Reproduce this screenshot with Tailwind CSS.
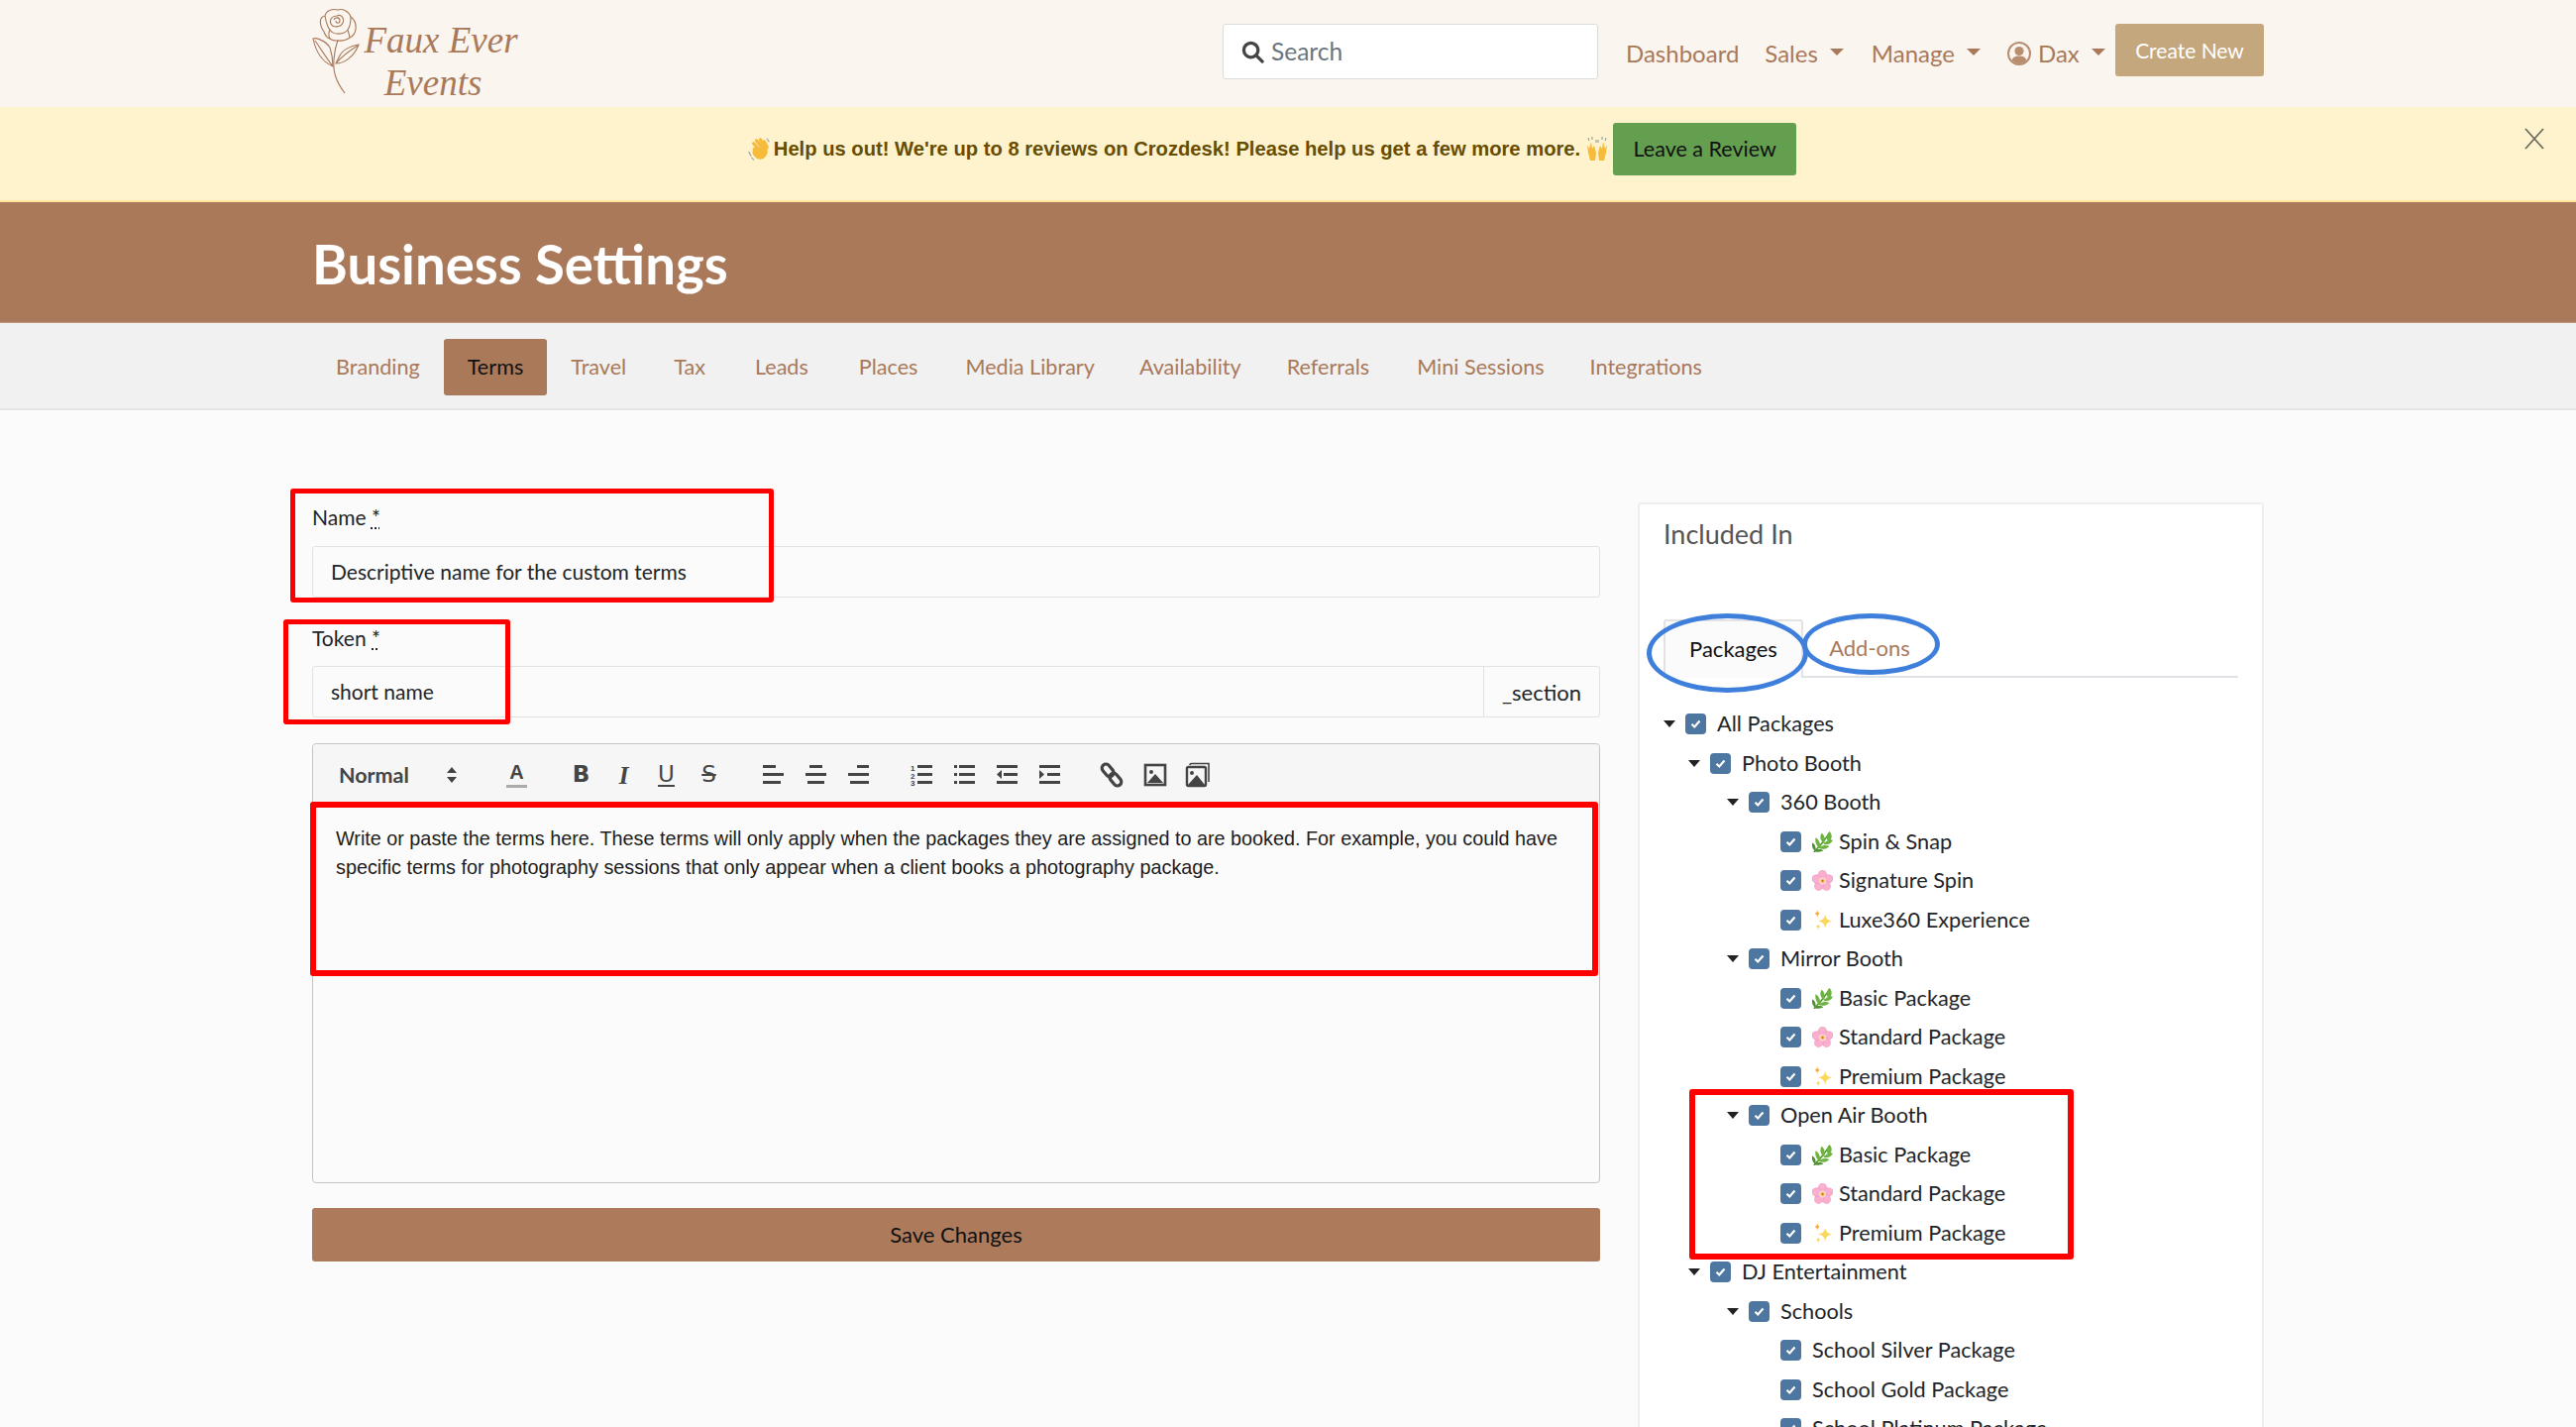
<!DOCTYPE html>
<html lang="en">
<head>
    <meta charset="UTF-8">
    <title>Business Settings - Faux Ever Events</title>
    <script src="https://cdn.jsdelivr.net/npm/@tailwindcss/browser@4"></script>
</head>
<body class="bg-[#fbfbfb]">
    <!-- emoji drawings, no emoji font available -->
    <svg class="hidden">
        <symbol id="e-herb" viewBox="0 0 24 24">
            <path d="M2 24 C8 18 14 11 20 2" fill="none" stroke="#4e9132" stroke-width="1.6"/>
            <path d="M20 0 C24 4 23 9 19 12 C16 8 16 4 20 0Z M11 2 C15 5 15 10 14 14 C10 12 8 6 11 2Z M24 10 C22 14 18 16 13 15 C15 11 20 9 24 10Z M4 7 C8 9 10 14 9 19 C5 17 3 12 4 7Z M20 17 C16 21 11 21 7 19 C10 16 16 15 20 17Z" fill="#6db33f"/>
            <path d="M0 13 C3 14 5 18 4 23 C1 21 -1 17 0 13Z M13 22 C10 24 6 24 3 23 C5 20 10 20 13 22Z" fill="#4e9132"/>
        </symbol>
        <symbol id="e-flower" viewBox="0 0 24 24">
            <g fill="#f9b0cf" stroke="#ee86b2" stroke-width=".5">
                <ellipse cx="12" cy="6" rx="5" ry="6"/>
                <ellipse cx="12" cy="6" rx="5" ry="6" transform="rotate(72 12 12.500)"/>
                <ellipse cx="12" cy="6" rx="5" ry="6" transform="rotate(144 12 12.500)"/>
                <ellipse cx="12" cy="6" rx="5" ry="6" transform="rotate(216 12 12.500)"/>
                <ellipse cx="12" cy="6" rx="5" ry="6" transform="rotate(288 12 12.500)"/>
            </g>
            <circle cx="12" cy="12.500" r="4" fill="#fbd3e2"/>
            <circle cx="12" cy="12.500" r="2.200" fill="#f2b632"/>
            <circle cx="12" cy="12.500" r="1" fill="#e25d4a"/>
        </symbol>
        <symbol id="e-spark" viewBox="0 0 24 24">
            <path d="M15 5 C15.800 10 17 11.500 23 13 C17 14.500 15.800 16 15 22 C14.200 16 13 14.500 7 13 C13 11.500 14.200 10 15 5Z" fill="#fbd75b"/>
            <path d="M6 0 C6.400 3 7 3.600 9 4.500 C7 5.400 6.400 6 6 9 C5.600 6 5 5.400 3 4.500 C5 3.600 5.600 3 6 0Z" fill="#f7a93b"/>
            <path d="M7 16 C7.300 18 7.800 18.600 9.500 19.500 C7.800 20.400 7.300 21 7 24 C6.700 21 6.200 20.400 4.500 19.500 C6.200 18.600 6.700 18 7 16Z" fill="#fbd75b"/>
        </symbol>
        <symbol id="e-wave" viewBox="0 0 24 24">
            <path d="M7 6 L13 13 M10 3 L16 11 M14 2 L19 10 M18 4 L21 10" stroke="#f7bb3c" stroke-width="3.400" stroke-linecap="round"/>
            <path d="M6 11 C8 9 10 10 12 11 L20 8 C23 13 22 19 17 22 C12 24 8 21 6 17Z" fill="#f7bb3c"/>
            <path d="M2 15 L4 19 M5 21 L7 23 M21 1 L23 4" stroke="#9aa5ad" stroke-width="1.200" stroke-linecap="round"/>
        </symbol>
        <symbol id="e-hands" viewBox="0 0 24 24">
            <path d="M2 8 L3 16 L5 24 L10 24 L11 16 L9 9 L7 12 L6 5 L4 12Z M22 8 L21 16 L19 24 L14 24 L13 16 L15 9 L17 12 L18 5 L20 12Z" fill="#f7bb3c"/>
            <path d="M3 1 L4 4 M7 0 L7 3 M17 0 L17 3 M21 1 L20 4 M11 3 L11 6 M13 3 L13 6" stroke="#8a949c" stroke-width="1"/>
        </symbol>
    </svg>

    <div class="relative w-[2600px] h-[1440px] overflow-hidden font-['Lato',sans-serif] text-[21px] text-[#212529]">

        <!-- top nav -->
        <header class="h-[108px] bg-[#faf5ef]">
            <div class="w-[1970px] mx-auto h-full flex items-start">
                <div class="w-[919px] flex items-start pt-[8px]">
                    <svg class="w-[48px] h-[88px] shrink-0" viewBox="0 0 48 88" fill="none" stroke="#a9795a" stroke-width="1.100">
                        <path d="M12 24 C7 17 7 9 13 8 C14 3 20 .5 26 2 C31 .5 37 3 39 9 C47 15 45 27 38 30 C33 34 22 34 18 31 C14 30 13 27 12 24Z"/>
                        <path d="M25 8 C20 8 17 12 19 16 C21 20 29 20 31 15 C33 10 29 6 25 8 M22 12 C23 9 28 9 28 13 C28 16 24 16 24 13"/>
                        <path d="M13 8 C14 13 15 19 18 22 C22 28 32 27 36 22 C39 18 39 13 39 9 M18 22 C16 26 17 29 18 31 M36 22 C37 26 38 28 38 30"/>
                        <path d="M26 32 C22 44 20 60 24 70 C26 76 30 82 33 86"/>
                        <path d="M1 31 C3 30 13 32 18 40 C20 46 21 54 21 59 C14 56 5 50 1 31Z M3 33 C8 40 14 50 21 59"/>
                        <path d="M47 37 C40 38 31 42 28 48 C26 52 24 56 24 56 C32 56 42 50 47 37Z M46 38 C38 43 30 49 24 56"/>
                    </svg>
                    <div class="ml-[2px] mt-[11px] w-[160px] text-center font-['Liberation_Serif',serif] italic text-[37px] leading-[43px] text-[#a9795a] whitespace-nowrap">
                        <div>Faux Ever</div>
                        <div class="pr-[16px]">Events</div>
                    </div>
                </div>
                <div class="mt-[24px] w-[379px] h-[56px] bg-white border border-[#dcdcdc] rounded-[3px] flex items-center pl-[18px] text-[#6c757d] text-[24.500px]">
                    <svg class="w-[23px] h-[23px] mr-[7px]" viewBox="0 0 24 24" fill="none" stroke="#444" stroke-width="3.400"><circle cx="10" cy="10" r="7.500"/><path d="M15.500 15.500 L22 22" stroke-linecap="round"/></svg>
                    Search
                </div>
                <nav class="h-[108px] flex items-center text-[#a9795a] text-[24px] whitespace-nowrap">
                    <a class="ml-[28px]">Dashboard</a>
                    <a class="ml-[26px] flex items-center">Sales<i class="ml-[12px] mb-[4px] border-x-[7px] border-x-transparent border-t-[7px] border-t-[#a9795a]"></i></a>
                    <a class="ml-[28px] flex items-center">Manage<i class="ml-[12px] mb-[4px] border-x-[7px] border-x-transparent border-t-[7px] border-t-[#a9795a]"></i></a>
                    <a class="ml-[27px] flex items-center">
                        <svg class="w-[24px] h-[24px] mr-[7px]" viewBox="0 0 24 24"><circle cx="12" cy="12" r="11" fill="none" stroke="#b98d70" stroke-width="2"/><circle cx="12" cy="9.500" r="4.600" fill="#b98d70"/><path d="M4.500 19 C6 15 9 14.500 12 14.500 C15 14.500 18 15 19.500 19 C15 23 9 23 4.500 19Z" fill="#b98d70"/></svg>
                        Dax<i class="ml-[12px] mb-[4px] border-x-[7px] border-x-transparent border-t-[7px] border-t-[#a9795a]"></i>
                    </a>
                </nav>
                <a class="ml-auto mt-[24px] w-[150px] h-[53px] bg-[#c4a77d] rounded-[3px] text-white text-[21px] flex items-center justify-center">Create New</a>
            </div>
        </header>

        <!-- review banner -->
        <div class="relative h-[96px] bg-[#fff3cd] border-b-2 border-[#ffe69c] flex items-center justify-center pr-[33px] pb-[10px]">
            <svg class="w-[23px] h-[23px] mr-[4px]"><use href="#e-wave"/></svg>
            <b class="font-['Liberation_Sans',sans-serif] text-[20.200px] text-[#664d03] whitespace-nowrap">Help us out! We're up to 8 reviews on Crozdesk! Please help us get a few more more.</b>
            <svg class="w-[24px] h-[24px] ml-[5px] mr-[4px]"><use href="#e-hands"/></svg>
            <a class="w-[185px] h-[53px] bg-[#649f50] rounded-[3px] text-[#111] text-[21.500px] flex items-center justify-center">Leave a Review</a>
            <svg class="absolute left-[2548px] top-[21px] w-[20px] h-[22px]" viewBox="0 0 20 22" fill="none" stroke="#6b6b5e" stroke-width="1.800"><path d="M1 1 L19 21 M19 1 L1 21"/></svg>
        </div>

        <!-- page title -->
        <div class="h-[122px] bg-[#a9795a] border-b border-[#c09a80]">
            <h1 class="w-[1970px] mx-auto pt-[28px] text-white text-[54.500px] leading-[68px] font-bold">Business Settings</h1>
        </div>

        <!-- settings tabs -->
        <div class="h-[88px] bg-[#f1f1f1] border-b-2 border-[#e6e6e6]">
            <div class="w-[1970px] mx-auto flex pt-[16px] text-[#a9795a] text-[21.600px]">
                <a class="h-[57px] pl-[24px] pr-[24px] flex items-center">Branding</a>
                <a class="h-[57px] pl-[24px] pr-[24px] flex items-center bg-[#a9795a] text-[#111] rounded-[3px]">Terms</a>
                <a class="h-[57px] pl-[24px] pr-[24px] flex items-center">Travel</a>
                <a class="h-[57px] pl-[24px] pr-[26px] flex items-center">Tax</a>
                <a class="h-[57px] pl-[24px] pr-[27px] flex items-center">Leads</a>
                <a class="h-[57px] pl-[24px] pr-[24px] flex items-center">Places</a>
                <a class="h-[57px] pl-[24px] pr-[21px] flex items-center">Media Library</a>
                <a class="h-[57px] pl-[24px] pr-[22px] flex items-center">Availability</a>
                <a class="h-[57px] pl-[24px] pr-[24px] flex items-center">Referrals</a>
                <a class="h-[57px] pl-[24px] pr-[22px] flex items-center">Mini Sessions</a>
                <a class="h-[57px] pl-[24px] pr-[24px] flex items-center">Integrations</a>
            </div>
        </div>

        <main class="w-[1970px] mx-auto flex gap-[38px] pt-[93px]">
            <!-- terms form -->
            <form class="w-[1300px] shrink-0">
                <label class="block h-[30px] leading-[30px] mb-[14px]">Name <span class="underline decoration-dotted">*</span></label>
                <div class="h-[52px] border border-[#e2e2e2] rounded-[3px] bg-[#fbfbfb] flex items-center px-[18px]">Descriptive name for the custom terms</div>

                <label class="block h-[30px] leading-[30px] mt-[26px] mb-[13px]">Token <span class="underline decoration-dotted">*</span></label>
                <div class="h-[52px] border border-[#e2e2e2] rounded-[3px] flex items-center">
                    <span class="flex-1 px-[18px]">short name</span>
                    <span class="w-[117px] h-full border-l border-[#e2e2e2] flex items-center justify-center text-[22px]">_section</span>
                </div>

                <div class="mt-[26px] h-[444px] border border-[#c4c4c4] rounded-[4px] bg-[#fbfbfb]">
                    <div class="h-[58px] pt-[4px] bg-[#f6f6f6] rounded-t-[4px] flex items-center pl-[26px] text-[#444]">
                        <div class="w-[158px] flex items-center font-bold text-[21.500px]">
                            <span class="w-[108px]">Normal</span>
                            <svg class="w-[12px] h-[18px]" viewBox="0 0 12 18" fill="#444"><path d="M6 1 L11 7 L1 7Z M6 17 L11 11 L1 11Z"/></svg>
                        </div>
                        <span class="w-[43px] h-[30px] flex flex-col items-center font-['Liberation_Sans',sans-serif] font-bold text-[20px] leading-[24px]">A<i class="w-[21px] h-[3px] mt-[1px] bg-[#aaa]"></i></span>

                        <div class="ml-[22px] flex font-['DejaVu_Sans',sans-serif] text-[23px] leading-none">
                            <span class="w-[43px] text-center font-semibold">B</span>
                            <span class="w-[43px] text-center italic font-['Liberation_Serif',serif] font-bold text-[25px]">I</span>
                            <span class="w-[43px] text-center underline underline-offset-[3px]">U</span>
                            <span class="w-[43px] text-center line-through">S</span>
                        </div>

                        <div class="ml-[22px] flex">
                            <svg class="w-[43px] h-[24px]" viewBox="0 0 43 24" fill="#444"><path d="M11 2h13v3H11z M11 10h21v3H11z M11 18h18v3H11z"/></svg>
                            <svg class="w-[43px] h-[24px]" viewBox="0 0 43 24" fill="#444"><path d="M15 2h13v3H15z M11 10h21v3H11z M13 18h17v3H13z"/></svg>
                            <svg class="w-[43px] h-[24px]" viewBox="0 0 43 24" fill="#444"><path d="M20 2h12v3H20z M11 10h21v3H11z M13 18h19v3H13z"/></svg>
                        </div>

                        <div class="ml-[21px] flex">
                            <svg class="w-[43px] h-[24px]" viewBox="0 0 43 24" fill="#444"><text x="10" y="8" font-size="8" font-weight="700" font-family="Liberation Sans">1</text><text x="10" y="15.500" font-size="8" font-weight="700" font-family="Liberation Sans">2</text><text x="10" y="23" font-size="8" font-weight="700" font-family="Liberation Sans">3</text><path d="M17 2h15v3H17z M17 10h15v3H17z M17 18h15v3H17z"/></svg>
                            <svg class="w-[43px] h-[24px]" viewBox="0 0 43 24" fill="#444"><path d="M11 2h3v3h-3z M11 10h3v3h-3z M11 18h3v3h-3z M16 2h16v3H16z M16 10h16v3H16z M16 18h16v3H16z"/></svg>
                            <svg class="w-[43px] h-[24px]" viewBox="0 0 43 24" fill="#444"><path d="M11 2h21v3H11z M18 10h14v3H18z M11 18h21v3H11z M16 7v9l-5-4.500z"/></svg>
                            <svg class="w-[43px] h-[24px]" viewBox="0 0 43 24" fill="#444"><path d="M11 2h21v3H11z M19 10h13v3H19z M11 18h21v3H11z M11 7v9l5-4.500z"/></svg>
                        </div>

                        <div class="ml-[20px] flex">
                            <svg class="w-[43px] h-[26px]" viewBox="0 0 43 26" fill="none" stroke="#444" stroke-width="3.200"><g transform="rotate(50 21 13)"><rect x="8" y="9" width="14" height="8" rx="4"/><rect x="20" y="9" width="14" height="8" rx="4"/></g></svg>
                            <svg class="w-[43px] h-[26px]" viewBox="0 0 43 26"><rect x="12" y="3" width="20" height="20" fill="none" stroke="#444" stroke-width="2.600"/><circle cx="18" cy="10" r="2" fill="#444"/><path d="M14 21 L22 12 L30 21Z" fill="#444"/></svg>
                            <svg class="w-[43px] h-[26px]" viewBox="0 0 43 26"><path d="M14 3 Q14 1.500 16 1.500 H33 V20" fill="none" stroke="#444" stroke-width="1.600"/><rect x="11" y="5" width="19" height="19" rx="1.500" fill="none" stroke="#444" stroke-width="2.400"/><circle cx="16" cy="11" r="2" fill="#444"/><path d="M12 23 L21 13 L29 23Z" fill="#444"/></svg>
                        </div>
                    </div>
                    <div class="pt-[23px] px-[23px] font-['Liberation_Sans',sans-serif] text-[19.800px] leading-[28.500px] text-[#1c1c1c]">Write or paste the terms here. These terms will only apply when the packages they are assigned to are booked. For example, you could have specific terms for photography sessions that only appear when a client books a photography package.</div>
                </div>

                <button type="button" class="mt-[25px] pb-[2px] w-full h-[54px] bg-[#ad7b5c] rounded-[3px] text-[#111] text-[22px]">Save Changes</button>
            </form>

            <!-- included in -->
            <aside class="flex-1 h-[1000px] border-2 border-[#eeeeee] rounded-[3px] bg-white px-[24px] pt-[14px]">
                <h2 class="h-[32px] leading-[32px] text-[27px] text-[#555]">Included In</h2>
                <div class="mt-[70px] h-[59px] flex border-b-2 border-[#dfe2e6] text-[22px]">
                    <a class="w-[141px] h-[59px] pb-[2px] border-2 border-b-0 border-[#e3e3e3] rounded-t-[3px] bg-[#fbfbfb] text-[#111] flex items-center justify-center">Packages</a>
                    <a class="w-[134px] h-[58px] pb-[2px] text-[#a9795a] flex items-center justify-center">Add-ons</a>
                </div>
                <div id="package-tree" class="mt-[27px] text-[21.700px]"></div>
            </aside>
        </main>

        <!-- annotations drawn on the screenshot -->
        <div class="absolute left-[293px] top-[493px] w-[488px] h-[115px] border-[5px] border-[#ff0000] rounded-[3px]"></div>
        <div class="absolute left-[286px] top-[625px] w-[229px] h-[106px] border-[5px] border-[#ff0000] rounded-[3px]"></div>
        <div class="absolute left-[313px] top-[809px] w-[1300px] h-[176px] border-[6px] border-[#ff0000] rounded-[3px]"></div>
        <div class="absolute left-[1705px] top-[1099px] w-[388px] h-[172px] border-[6px] border-[#ff0000] rounded-[3px]"></div>
        <div class="absolute left-[1662px] top-[619px] w-[163px] h-[80px] border-[5px] border-[#3f7fdc] rounded-[50%]"></div>
        <div class="absolute left-[1819px] top-[619px] w-[139px] h-[62px] border-[5px] border-[#3f7fdc] rounded-[50%]"></div>
    </div>

    <script>
        const tree = [
            [0, 'All Packages'], [1, 'Photo Booth'], [2, '360 Booth'],
            [3, 'Spin &amp; Snap', 'e-herb'], [3, 'Signature Spin', 'e-flower'], [3, 'Luxe360 Experience', 'e-spark'],
            [2, 'Mirror Booth'],
            [3, 'Basic Package', 'e-herb'], [3, 'Standard Package', 'e-flower'], [3, 'Premium Package', 'e-spark'],
            [2, 'Open Air Booth'],
            [3, 'Basic Package', 'e-herb'], [3, 'Standard Package', 'e-flower'], [3, 'Premium Package', 'e-spark'],
            [1, 'DJ Entertainment'], [2, 'Schools'],
            [3, 'School Silver Package'], [3, 'School Gold Package'], [3, 'School Platinum Package']
        ];
        const indent = ['pl-0', 'pl-[25px]', 'pl-[64px]', 'pl-[118px]'];

        let html = '';
        tree.forEach(([depth, label, emoji]) => {
            const caret = depth < 3 ? '<i class="w-0 h-0 mr-[10px] border-x-[6px] border-x-transparent border-t-[7px] border-t-[#222]"></i>' : '';
            const pic = emoji ? `<svg class="w-[21px] h-[21px] mr-[6px]"><use href="#${emoji}"/></svg>` : '';
            html += `<div class="h-[39.500px] flex items-center whitespace-nowrap ${indent[depth]}">
                ${caret}
                <span class="w-[21px] h-[21px] mr-[11px] rounded-[4px] bg-[#4d76a1] flex items-center justify-center">
                    <svg class="w-[13px] h-[13px]" viewBox="0 0 13 13" fill="none" stroke="#fff" stroke-width="2.200"><path d="M2.500 6.800 L5.300 9.500 L10.500 3.500"/></svg>
                </span>
                ${pic}<span>${label}</span>
            </div>`;
        });
        document.getElementById('package-tree').innerHTML = html;
    </script>
</body>
</html>
